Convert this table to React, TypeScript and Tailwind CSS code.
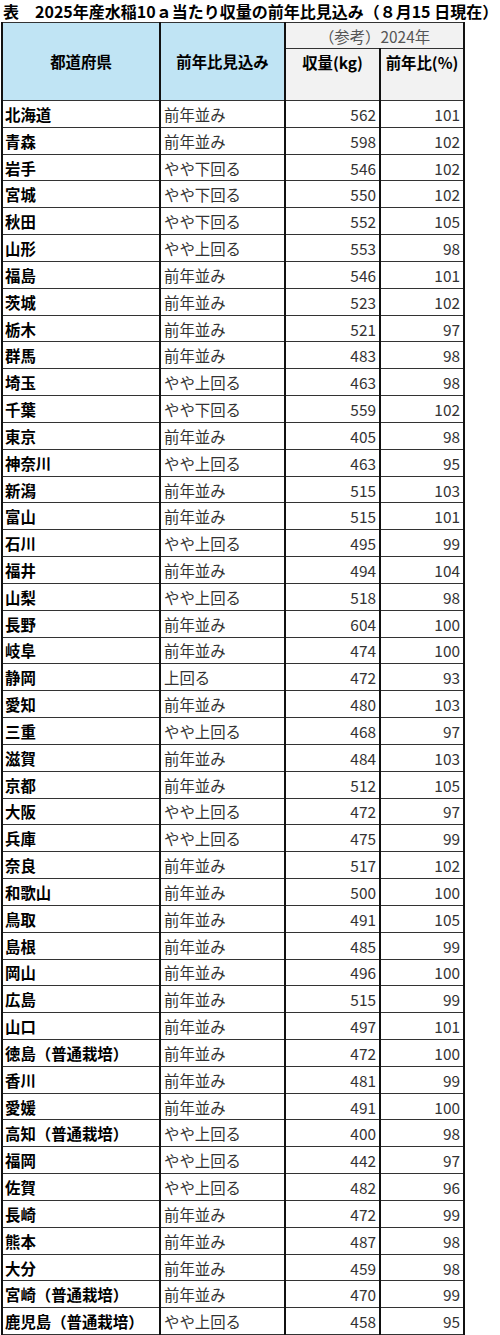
const rows: [string, string, number, number][] = [
  ["北海道", "前年並み", 562, 101],
  ["青森", "前年並み", 598, 102],
  ["岩手", "やや下回る", 546, 102],
  ["宮城", "やや下回る", 550, 102],
  ["秋田", "やや下回る", 552, 105],
  ["山形", "やや上回る", 553, 98],
  ["福島", "前年並み", 546, 101],
  ["茨城", "前年並み", 523, 102],
  ["栃木", "前年並み", 521, 97],
  ["群馬", "前年並み", 483, 98],
  ["埼玉", "やや上回る", 463, 98],
  ["千葉", "やや下回る", 559, 102],
  ["東京", "前年並み", 405, 98],
  ["神奈川", "やや上回る", 463, 95],
  ["新潟", "前年並み", 515, 103],
  ["富山", "前年並み", 515, 101],
  ["石川", "やや上回る", 495, 99],
  ["福井", "前年並み", 494, 104],
  ["山梨", "やや上回る", 518, 98],
  ["長野", "前年並み", 604, 100],
  ["岐阜", "前年並み", 474, 100],
  ["静岡", "上回る", 472, 93],
  ["愛知", "前年並み", 480, 103],
  ["三重", "やや上回る", 468, 97],
  ["滋賀", "前年並み", 484, 103],
  ["京都", "前年並み", 512, 105],
  ["大阪", "やや上回る", 472, 97],
  ["兵庫", "やや上回る", 475, 99],
  ["奈良", "前年並み", 517, 102],
  ["和歌山", "前年並み", 500, 100],
  ["鳥取", "前年並み", 491, 105],
  ["島根", "前年並み", 485, 99],
  ["岡山", "前年並み", 496, 100],
  ["広島", "前年並み", 515, 99],
  ["山口", "前年並み", 497, 101],
  ["徳島（普通栽培）", "前年並み", 472, 100],
  ["香川", "前年並み", 481, 99],
  ["愛媛", "前年並み", 491, 100],
  ["高知（普通栽培）", "やや上回る", 400, 98],
  ["福岡", "やや上回る", 442, 97],
  ["佐賀", "やや上回る", 482, 96],
  ["長崎", "前年並み", 472, 99],
  ["熊本", "前年並み", 487, 98],
  ["大分", "前年並み", 459, 98],
  ["宮崎（普通栽培）", "前年並み", 470, 99],
  ["鹿児島（普通栽培）", "やや上回る", 458, 95],
];

const cell = "border-x-2 border-x-[#111] border-y-[1.5px] border-y-[#333]";

export default function App() {
  return (
    <div
      className="w-[500px] bg-white text-black"
      style={{ fontFamily: '"Noto Sans CJK JP", "Noto Sans", sans-serif' }}
    >
      <h1 className="h-[22px] pl-[3px] text-[16px] font-bold leading-[22px] whitespace-nowrap">
        表　2025年産水稲10ａ当たり収量の前年比見込み（８月15 日現在）
      </h1>
      <table className="ml-[1px] w-[462px] table-fixed border-collapse text-[15.4px]">
        <colgroup>
          <col className="w-[158px]" />
          <col className="w-[125px]" />
          <col className="w-[95px]" />
          <col className="w-[84px]" />
        </colgroup>
        <thead>
          <tr className="h-[26px]">
            <th rowSpan={2} className={`${cell} bg-[#c0e4f4] text-center align-middle font-bold`}>
              都道府県
            </th>
            <th rowSpan={2} className={`${cell} bg-[#c0e4f4] text-center align-middle font-bold`}>
              前年比見込み
            </th>
            <th colSpan={2} className={`${cell} bg-[#f2f2f2] text-center align-middle font-normal leading-[20px] text-[#555]`}>
              （参考）2024年
            </th>
          </tr>
          <tr className="h-[52px]">
            <th className={`${cell} bg-[#f2f2f2] pt-[3px] text-center align-top font-bold leading-[20px]`}>
              収量(kg)
            </th>
            <th className={`${cell} bg-[#f2f2f2] pt-[3px] text-center align-top font-bold leading-[20px]`}>
              前年比(%)
            </th>
          </tr>
        </thead>
        <tbody>
          {rows.map(([pref, outlook, kg, pct]) => (
            <tr key={pref} className="h-[26.83px]">
              <td className={`${cell} pl-[2px] align-middle font-bold leading-[20px] whitespace-nowrap`}>{pref}</td>
              <td className={`${cell} pl-[3px] align-middle leading-[20px] text-[#333]`}>{outlook}</td>
              <td className={`${cell} pr-[3px] text-right align-middle leading-[20px] text-[#333]`}>{kg}</td>
              <td className={`${cell} pr-[3px] text-right align-middle leading-[20px] text-[#333]`}>{pct}</td>
            </tr>
          ))}
        </tbody>
      </table>
    </div>
  );
}
